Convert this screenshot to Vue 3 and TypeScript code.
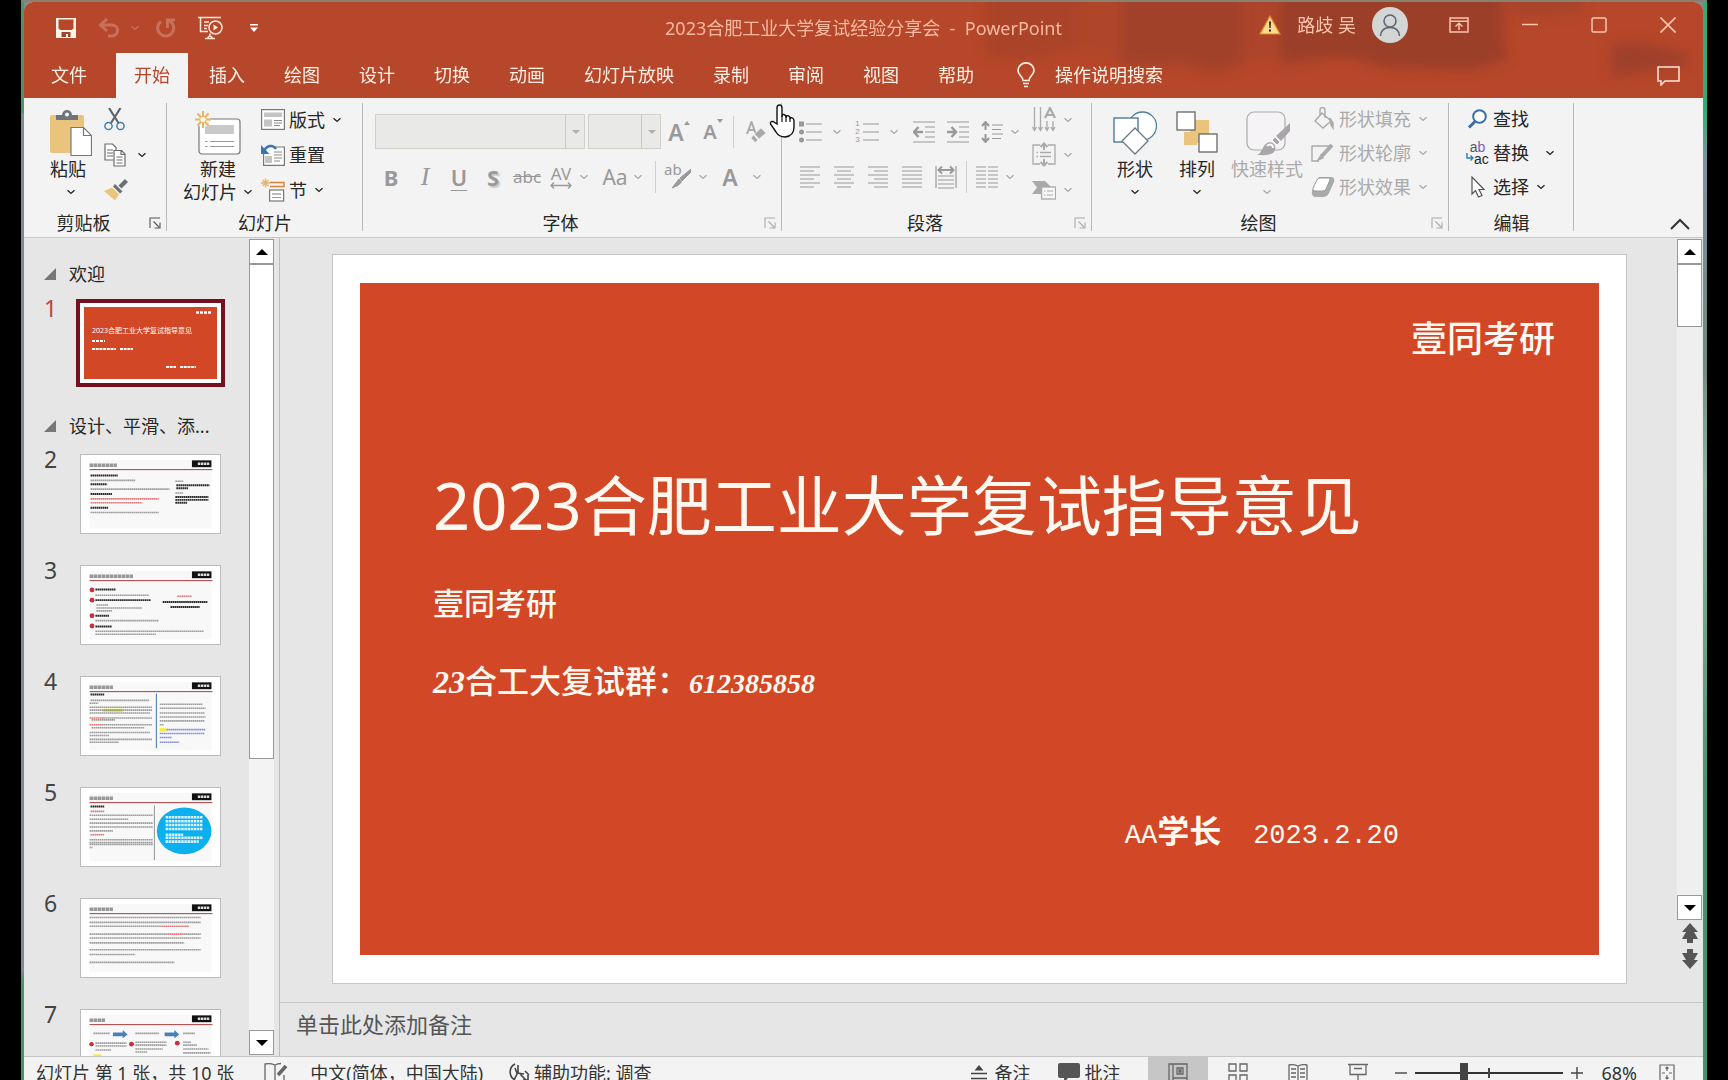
<script setup lang="ts">
import { h, ref } from 'vue'

interface Line { x: number; y: number; w: number; c?: string; b?: boolean }
interface Thumb { n: number; title: number; lines: Line[] }

const Chevron = () =>
  h('svg', { class: 'chev', viewBox: '0 0 10 6', width: 10, height: 6, 'aria-hidden': 'true' }, [
    h('path', { d: 'M1.5 1.2 5 4.4 8.5 1.2', fill: 'none', stroke: 'currentColor', 'stroke-width': 1.4 }),
  ])

const Launcher = () =>
  h('svg', { viewBox: '0 0 12 12', width: 12, height: 12, 'aria-hidden': 'true' }, [
    h('path', { d: 'M1 11V1h10M4.500 4.500 10 10M11 5.500V11H5.500', fill: 'none', stroke: 'currentColor', 'stroke-width': 1.1 }),
  ])

const tabs = ['开始', '插入', '绘图', '设计', '切换', '动画', '幻灯片放映', '录制', '审阅', '视图', '帮助']
const activeTab = ref('开始')
const zoom = ref(32)
const notes = ref('')

const red = '#d8434a'
const grey = '#777'
const thumbs: Thumb[] = [
  { n: 2, title: 28, lines: [
    { x: 9, y: 21, w: 28, b: true }, { x: 9, y: 26, w: 46 }, { x: 9, y: 30, w: 17, b: true }, { x: 9, y: 35, w: 81 },
    { x: 9, y: 40, w: 22, b: true }, { x: 9, y: 45, w: 70, c: red }, { x: 9, y: 49, w: 53, c: red },
    { x: 9, y: 54, w: 18, b: true }, { x: 9, y: 59, w: 70 },
    { x: 96, y: 27, w: 8 }, { x: 97, y: 31, w: 34, b: true }, { x: 97, y: 34, w: 12, b: true }, { x: 96, y: 39, w: 8 },
    { x: 96, y: 43, w: 34, b: true }, { x: 96, y: 46, w: 34, b: true }, { x: 96, y: 49, w: 12, b: true }] },
  { n: 3, title: 45, lines: [
    { x: 14, y: 24, w: 21, b: true }, { x: 14, y: 30, w: 55 }, { x: 14, y: 35, w: 57, b: true }, { x: 15, y: 40, w: 12 },
    { x: 15, y: 43, w: 47 }, { x: 15, y: 46, w: 16 }, { x: 14, y: 51, w: 14, b: true }, { x: 14, y: 56, w: 65 },
    { x: 14, y: 62, w: 17, b: true }, { x: 14, y: 67, w: 111 }, { x: 14, y: 70, w: 62 },
    { x: 98, y: 31, w: 15, c: red }, { x: 83, y: 37, w: 46, b: true }, { x: 91, y: 42, w: 30, b: true }] },
  { n: 4, title: 24, lines: [
    { x: 9, y: 18, w: 14, b: true }, { x: 9, y: 24, w: 60 }, { x: 8, y: 27, w: 9 }, { x: 8, y: 31, w: 64 }, { x: 8, y: 34, w: 64 },
    { x: 8, y: 37, w: 62 }, { x: 8, y: 42, w: 14, c: red }, { x: 22, y: 42, w: 50 }, { x: 10, y: 44, w: 24 },
    { x: 8, y: 49, w: 12, c: red }, { x: 20, y: 49, w: 52 }, { x: 10, y: 52, w: 54 }, { x: 8, y: 57, w: 62 }, { x: 8, y: 60, w: 20 },
    { x: 8, y: 64, w: 64 }, { x: 8, y: 67, w: 30 },
    { x: 80, y: 28, w: 44 }, { x: 80, y: 32, w: 47 }, { x: 80, y: 37, w: 46 }, { x: 80, y: 41, w: 47 }, { x: 80, y: 45, w: 46 }, { x: 80, y: 49, w: 4 },
    { x: 87, y: 54, w: 40, c: '#5566cc' }, { x: 80, y: 58, w: 46, c: '#5566cc' }, { x: 80, y: 62, w: 12, c: '#5566cc' }, { x: 80, y: 67, w: 20, c: '#5566cc' }] },
  { n: 5, title: 24, lines: [
    { x: 9, y: 19, w: 14, b: true }, { x: 9, y: 24, w: 14, c: red }, { x: 8, y: 28, w: 65 }, { x: 8, y: 32, w: 40 }, { x: 8, y: 36, w: 65 },
    { x: 8, y: 40, w: 65 }, { x: 8, y: 44, w: 24 }, { x: 9, y: 48, w: 14, c: red }, { x: 8, y: 53, w: 65 }, { x: 8, y: 56, w: 65 },
    { x: 8, y: 58, w: 65 }, { x: 8, y: 61, w: 3 }] },
  { n: 6, title: 24, lines: [
    { x: 8, y: 19, w: 114 }, { x: 8, y: 24, w: 114 }, { x: 8, y: 28, w: 74 }, { x: 82, y: 28, w: 28, c: red },
    { x: 8, y: 36, w: 80 }, { x: 88, y: 36, w: 14, c: red }, { x: 102, y: 36, w: 20 }, { x: 8, y: 40, w: 114 }, { x: 8, y: 45, w: 97 },
    { x: 8, y: 52, w: 114 }, { x: 8, y: 57, w: 47 }, { x: 8, y: 65, w: 87 }] },
  { n: 7, title: 16, lines: [
    { x: 12, y: 24, w: 17 }, { x: 55, y: 24, w: 24 }, { x: 104, y: 24, w: 12 }, { x: 14, y: 34, w: 32 }, { x: 14, y: 37, w: 32 }, { x: 14, y: 41, w: 16 },
    { x: 55, y: 33, w: 32 }, { x: 55, y: 36, w: 32 }, { x: 55, y: 40, w: 28 }, { x: 55, y: 43, w: 12 }, { x: 104, y: 33, w: 8 }, { x: 104, y: 36, w: 14 },
    { x: 104, y: 40, w: 26 }, { x: 104, y: 44, w: 28 }] },
]
</script>

<template>
  <div class="frame">
    <div class="window">
      <header class="head">
        <svg class="smudge" viewBox="0 0 760 96" width="760" height="96" aria-hidden="true">
          <defs><filter id="soft" x="-10%" y="-30%" width="120%" height="160%"><feGaussianBlur stdDeviation="6" /></filter></defs>
          <g filter="url(#soft)" fill="#983f29">
            <path d="M42-20H136V44L88 58 42 54Z" opacity=".4" />
            <path d="M136-20H178V60L136 50Z" opacity=".2" />
            <path d="M178-20H300V62L270 72 240 62 178 64Z" opacity=".7" />
            <path d="M300-20H338V54L300 60Z" opacity=".3" />
            <path d="M338-20H560V44L566 56 530 68 450 66 400 54 338 62Z" opacity=".9" />
            <path d="M668 42 700 40 745 52V64L668 74Z" opacity=".8" />
            <path d="M560-20H640V10L570 14Z" opacity=".5" />
          </g>
        </svg>
        <div class="titlebar">
          <div class="quick">
            <button class="q-save" aria-label="保存">
              <svg width="20" height="20" viewBox="0 0 20 20"><path d="M0 0H20V20H0Z" fill="#fff3e8" /><path d="M2.500 1.500H17.500V10.500L15.500 12H4.500L2.500 10.500Z" fill="#b7472a" /><path d="M5.500 14H14.500V19H12V16H10V19H5.500Z" fill="#9a4632" /></svg>
            </button>
            <button class="q-undo" aria-label="撤消" disabled>
              <svg width="22" height="20" viewBox="0 0 22 20" fill="none" stroke="currentColor" stroke-width="3"><path d="M3 7H14A5.500 5.500 0 0 1 14 18H10" /><path d="M9 1 2.500 7 9 13" /></svg>
            </button>
            <button class="q-more" aria-label="撤消列表" disabled><Chevron /></button>
            <button class="q-redo" aria-label="重复" disabled>
              <svg width="20" height="22" viewBox="0 0 20 22" fill="none" stroke="currentColor" stroke-width="3"><path d="M5 4.500A8 8 0 1 0 13.500 4" /><path d="M11.500 11V3H19" /></svg>
            </button>
            <button class="q-show" aria-label="从头开始放映">
              <svg width="25" height="24" viewBox="0 0 25 24" fill="none" stroke="#ffe6d8" stroke-width="1.500"><path d="M0 1.500H23M2.500 2V15.500H10M6 6H11M6 9.500H10M6 12.500H9" /><circle cx="17.500" cy="11.500" r="6.500" /><path d="M15.500 8.500 20 11.500 15.500 14.500Z" fill="#ffe6d8" stroke="none" /><path d="M12 17.500V20M7 22.500H17M9.500 22 12 19.500 14.500 22" /></svg>
            </button>
            <button class="q-custom" aria-label="自定义快速访问工具栏">
              <svg width="8" height="8" viewBox="0 0 8 8" fill="#fff"><path d="M0 0H8V1.500H0ZM0 3.500H8L4 8Z" /></svg>
            </button>
          </div>
          <h1>2023合肥工业大学复试经验分享会&nbsp; -&nbsp; PowerPoint</h1>
          <div class="account">
            <svg class="warn" width="22" height="20" viewBox="0 0 22 20"><path d="M11 1 21 19H1Z" fill="#ffd98c" stroke="#e08a2c" stroke-width="1.200" /><path d="M10 6.500H12L11.600 13H10.400ZM10 14.500H12V16.500H10Z" fill="#222" /></svg>
            <span class="user">路歧 吴</span>
            <span class="avatar"><svg width="24" height="24" viewBox="0 0 24 24" fill="none" stroke="#5c6470" stroke-width="1.500"><circle cx="12" cy="8" r="6" /><path d="M2.500 23C3 17 7 14.500 12 14.500S21 17 21.500 23" /></svg></span>
            <button class="win" aria-label="功能区显示选项"><svg width="20" height="16" viewBox="0 0 20 16" fill="none" stroke="currentColor" stroke-width="1.500"><path d="M1 1H19V15H1ZM1 4.200H19M10 13V7M6.500 9.500 10 6.200 13.500 9.500" /></svg></button>
            <button class="win" aria-label="最小化"><svg width="16" height="16" viewBox="0 0 16 16" stroke="currentColor" stroke-width="1.500"><path d="M0 7.500H16" /></svg></button>
            <button class="win" aria-label="最大化"><svg width="16" height="16" viewBox="0 0 16 16" fill="none" stroke="currentColor" stroke-width="1.500"><rect x="1" y="1" width="14" height="14" rx="1.500" /></svg></button>
            <button class="win" aria-label="关闭"><svg width="16" height="16" viewBox="0 0 16 16" stroke="currentColor" stroke-width="1.600"><path d="M.5.500 15.500 15.500M15.500.500.5 15.500" /></svg></button>
          </div>
        </div>
        <nav class="tabs">
          <button class="tab file">文件</button>
          <button v-for="t in tabs" :key="t" class="tab" :class="{ on: t === activeTab }" @click="activeTab = t">{{ t }}</button>
          <button class="tell">
            <svg width="18" height="26" viewBox="0 0 18 26" fill="none" stroke="#ffefe4" stroke-width="1.700"><path d="M6 18.500C6 14.500 1 13 1 8.500A8 7.600 0 0 1 17 8.500C17 13 12 14.500 12 18.500ZM6 21.500H12M7 24.500H11" /></svg>
            操作说明搜索
          </button>
          <button class="talk" aria-label="批注">
            <svg width="23" height="20" viewBox="0 0 23 20" fill="none" stroke="#ffe6d8" stroke-width="1.500"><path d="M1 1H22V15H8L4 19V15H1Z" /></svg>
          </button>
        </nav>
      </header>

      <section class="ribbon">
        <div class="group clip">
          <div class="body">
            <button class="big">
              <svg width="42" height="46" viewBox="0 0 42 46"><rect x="0" y="5" width="34" height="38" rx="2" fill="#eac47c" /><path d="M6 10V5H12A5 5 0 0 1 22 5H28V10Z" fill="#6f747c" /><circle cx="17" cy="4.500" r="2" fill="#f3f3f3" /><path d="M21 17.500H33.500L41.500 25.500V45.500H21Z" fill="#fff" stroke="#777" stroke-width="1.200" /><path d="M33.500 17.500V25.500H41.500" fill="none" stroke="#777" stroke-width="1.200" /></svg>
              <span class="cap">粘贴</span><span class="row2"><Chevron /></span>
            </button>
            <div class="stack">
              <button class="small" aria-label="剪切"><svg width="22" height="23" viewBox="0 0 22 23" fill="none"><path d="M5 0 14.500 15M16.500 0 7 15" stroke="#5f6670" stroke-width="2.200" /><circle cx="4.500" cy="18" r="3.600" stroke="#3f7caf" stroke-width="1.500" /><circle cx="16.500" cy="18" r="3.600" stroke="#3f7caf" stroke-width="1.500" /></svg></button>
              <button class="small copy" aria-label="复制"><svg width="22" height="24" viewBox="0 0 22 24" fill="#fff" stroke="#6b6b6b" stroke-width="1.200"><path d="M1 1H8.500L12 4.500V17H1ZM3 7H9M3 10H9M3 13H9" /><path d="M10 7.500H17.500L21 11V23H10ZM17 8V11.500H21M12.500 14H18.500M12.500 17H18.500M12.500 20H18.500" /></svg><Chevron /></button>
              <button class="small" aria-label="格式刷"><svg width="24" height="22" viewBox="0 0 24 22"><path d="M21 0 24 3 17.500 9.500 14.500 6.500Z" fill="#6b7078" /><path d="M11 5 18.500 12.500 16 14.500 9 7.500Z" fill="#6b7078" /><path d="M8 8.500 15 15.500 11 21.500 0 12Z" fill="#eac47c" /></svg></button>
            </div>
          </div>
          <div class="name"><span>剪贴板</span><button class="launch" aria-label="剪贴板选项"><Launcher /></button></div>
        </div>

        <div class="group slides">
          <div class="body">
            <button class="big wide">
              <svg width="46" height="44" viewBox="0 0 46 44"><rect x="4" y="8" width="41" height="35" rx="3" fill="#fff" stroke="#777" stroke-width="1.200" /><path d="M10 14H39V23H10Z" fill="#c9c9c9" /><path d="M10 30.500H12.500M15 30.500H39M10 35.500H12.500M15 35.500H39" stroke="#999" /><circle cx="8" cy="8.500" r="7.500" fill="#f3f3f3" /><g stroke="#e8b566" stroke-width="2"><path d="M8 0V17M0 8.500H16M2.500 2.500 13.500 14.500M13.500 2.500 2.500 14.500" /></g><circle cx="8" cy="8.500" r="3.200" fill="#fff6dd" stroke="#e8b566" /></svg>
              <span class="cap">新建</span><span class="row2">幻灯片<Chevron /></span>
            </button>
            <div class="stack">
              <button class="small"><svg width="24" height="21" viewBox="0 0 24 21"><rect x=".6" y=".6" width="22.800" height="19.800" fill="#fff" stroke="#777" stroke-width="1.200" /><path d="M3 3.500H21V8H3ZM3 10.500H11V17.500H3Z" fill="#c4c4c4" /><path d="M13 11.500H21M13 14H21M13 16.500H19" stroke="#888" /></svg>版式<Chevron /></button>
              <button class="small"><svg width="24" height="22" viewBox="0 0 24 22"><path d="M12 3H23.400V21.400H2.600V10" fill="#fff" stroke="#777" stroke-width="1.200" /><path d="M4 12H11V19H4Z" fill="#c4c4c4" /><path d="M13 8H21M13 11H21M13 14H21M13 17H19" stroke="#888" /><path d="M3 7C6 1 12 .500 15 5" fill="none" stroke="#3f74ad" stroke-width="2.400" /><path d="M0 1V10H8.500Z" fill="#3f74ad" /></svg>重置</button>
              <button class="small"><svg width="24" height="24" viewBox="0 0 24 24"><path d="M9 4.500H23V8.500H9" fill="none" stroke="#d9823b" stroke-width="1.400" /><rect x="8.600" y="12" width="14" height="11" fill="#fff" stroke="#777" stroke-width="1.200" /><path d="M11 15H20V17H11Z" fill="#bbb" /><path d="M11 19.500H20" stroke="#999" /><g stroke="#e8b566" stroke-width="1.400"><path d="M4.500.500V9.500M0 5H9M1.500 2 7.500 8M7.500 2 1.500 8" /></g></svg>节<Chevron /></button>
            </div>
          </div>
          <div class="name"><span>幻灯片</span></div>
        </div>

        <div class="group font off">
          <div class="rows">
            <div class="line combos">
              <span class="combo face"><select disabled aria-label="字体"><option></option></select><i></i></span>
              <span class="combo size"><select disabled aria-label="字号"><option></option></select><i></i></span>
              <button class="grow" aria-label="增大字号" disabled><span>A</span><svg width="6" height="4" viewBox="0 0 6 4"><path d="M0 4 3 0 6 4Z" fill="currentColor" /></svg></button>
              <button class="grow less" aria-label="减小字号" disabled><span>A</span><svg width="6" height="4" viewBox="0 0 6 4"><path d="M0 0H6L3 4Z" fill="currentColor" /></svg></button>
              <b class="sep"></b>
              <button class="erase" aria-label="清除格式" disabled><svg width="20" height="22" viewBox="0 0 20 22"><path d="M1 13 5.500 1 9.500 12M2.500 9H8" fill="none" stroke="currentColor" stroke-width="2" /><path d="M15 7 20 12 13 18 8.500 13ZM7.500 14 12 19 9 21.500 5 17Z" fill="currentColor" stroke="#f3f3f3" stroke-width=".6" /></svg></button>
            </div>
            <div class="line">
              <button class="cell glyph" disabled><strong>B</strong></button>
              <button class="cell glyph it" disabled><em>I</em></button>
              <button class="cell glyph" disabled><u>U</u></button>
              <button class="cell glyph sh" disabled><strong>S</strong></button>
              <button class="cell abc" disabled><s>abc</s></button>
              <button class="cell av" disabled aria-label="字符间距"><span>AV</span><svg width="22" height="7" viewBox="0 0 22 7" fill="none" stroke="currentColor" stroke-width="1.300"><path d="M1 3.500H21M4 .500 1 3.500 4 6.500M18 .500 21 3.500 18 6.500" /></svg></button>
              <button class="drop" disabled aria-label="字符间距列表"><Chevron /></button>
              <button class="cell aa" disabled>Aa</button>
              <button class="drop" disabled aria-label="更改大小写列表"><Chevron /></button>
              <b class="sep"></b>
              <button class="cell pen" disabled aria-label="突出显示"><span>ab</span><svg width="22" height="20" viewBox="0 0 22 20"><path d="M22 0 11 9 13 12 22 3ZM10 10 12.500 13 9 16.500 3 19Z" fill="currentColor" stroke="currentColor" /></svg></button>
              <button class="drop gap" disabled aria-label="突出显示颜色"><Chevron /></button>
              <button class="cell colr" disabled>A</button>
              <button class="drop far" disabled aria-label="字体颜色"><Chevron /></button>
            </div>
          </div>
          <div class="name"><span>字体</span><button class="launch" aria-label="字体选项"><Launcher /></button></div>
        </div>

        <div class="group para off">
          <div class="body">
            <div class="rows">
              <div class="line first">
                <button class="cell" disabled aria-label="项目符号"><svg width="23" height="22" viewBox="0 0 23 22"><path d="M0 .500H5V5.500H0Z" fill="currentColor" /><circle cx="2.500" cy="11" r="2.500" fill="currentColor" /><circle cx="2.500" cy="19" r="2.500" fill="currentColor" /><path d="M7 3H23M7 11H23M7 19H23" stroke="currentColor" stroke-width="1.200" /></svg></button>
                <button class="drop far" disabled aria-label="项目符号列表"><Chevron /></button>
                <button class="cell num" disabled aria-label="编号"><span><i>1</i><i>2</i><i>3</i></span><svg width="16" height="22" viewBox="0 0 16 22"><path d="M0 3H16M0 11H16M0 19H16" stroke="currentColor" stroke-width="1.200" /></svg></button>
                <button class="drop far" disabled aria-label="编号列表"><Chevron /></button>
                <button class="cell" disabled aria-label="减少缩进"><svg width="22" height="22" viewBox="0 0 22 22" fill="none" stroke="currentColor" stroke-width="1.200"><path d="M0 1H22M12 6H22M12 11H22M12 16H22M0 21H22" /><path d="M1 11H10M5.500 6 1 11 5.500 16" stroke-width="2.500" /></svg></button>
                <button class="cell" disabled aria-label="增加缩进"><svg width="22" height="22" viewBox="0 0 22 22" fill="none" stroke="currentColor" stroke-width="1.200"><path d="M0 1H22M12 6H22M12 11H22M12 16H22M0 21H22" /><path d="M0 11H9M4.500 6 9 11 4.500 16" stroke-width="2.500" /></svg></button>
                <button class="cell" disabled aria-label="行距"><svg width="22" height="22" viewBox="0 0 22 22" fill="none" stroke="currentColor" stroke-width="1.200"><path d="M11 4H22M11 8.500H20M11 13H22M11 17.500H20" /><path d="M4.500 1V9M1 5 4.500 1 8 5M4.500 13V21M1 17 4.500 21 8 17" stroke-width="2" /></svg></button>
                <button class="drop" disabled aria-label="行距列表"><Chevron /></button>
              </div>
              <div class="line">
                <button class="cell" disabled aria-label="左对齐"><svg width="20" height="22" viewBox="0 0 20 22" stroke="currentColor" stroke-width="1.200"><path d="M0 1H20M0 5H14M0 9H20M0 13H14M0 17H20M0 21H14" /></svg></button>
                <button class="cell" disabled aria-label="居中"><svg width="20" height="22" viewBox="0 0 20 22" stroke="currentColor" stroke-width="1.200"><path d="M0 1H20M3 5H17M0 9H20M3 13H17M0 17H20M3 21H17" /></svg></button>
                <button class="cell" disabled aria-label="右对齐"><svg width="20" height="22" viewBox="0 0 20 22" stroke="currentColor" stroke-width="1.200"><path d="M0 1H20M6 5H20M0 9H20M6 13H20M0 17H20M6 21H20" /></svg></button>
                <button class="cell" disabled aria-label="两端对齐"><svg width="20" height="22" viewBox="0 0 20 22" stroke="currentColor" stroke-width="1.200"><path d="M0 1H20M0 5H20M0 9H20M0 13H20M0 17H20M0 21H20" /></svg></button>
                <button class="cell" disabled aria-label="分散对齐"><svg width="22" height="24" viewBox="0 0 22 24" fill="none" stroke="currentColor" stroke-width="1.200"><path d="M1 1V23M21 1V23M3 11H19M3 15H19M3 19H19M3 23H19" /><path d="M4 5H18M7 1.500 3.500 5 7 8.500M15 1.500 18.500 5 15 8.500" stroke-width="2" /></svg></button>
                <b class="sep tight"></b>
                <button class="cell" disabled aria-label="分栏"><svg width="22" height="22" viewBox="0 0 22 22" stroke="currentColor" stroke-width="1.200"><path d="M0 1H10M12 1H22M0 5H10M12 5H22M0 9H10M12 9H22M0 13H10M12 13H22M0 17H10M12 17H22M0 21H10M12 21H22" /></svg></button>
                <button class="drop" disabled aria-label="分栏列表"><Chevron /></button>
              </div>
            </div>
            <div class="stack">
              <button class="small" disabled aria-label="文字方向"><svg width="24" height="25" viewBox="0 0 24 25" fill="none" stroke="currentColor" stroke-width="1.300"><path d="M2.500 0V23M8.500 0V23M15 14V23M21 14V23M.500 20 2.500 23.500 4.500 20M6.500 20 8.500 23.500 10.500 20M13 20 15 23.500 17 20M19 20 21 23.500 23 20" /><path d="M13 11 18 1 23 11M14.500 8H21.500" stroke-width="2.200" /></svg><Chevron /></button>
              <button class="small" disabled aria-label="对齐文本"><svg width="24" height="25" viewBox="0 0 24 25" fill="none" stroke="currentColor" stroke-width="1.300"><path d="M8 3H1V22H8M16 3H23V22H16M4.500 10.500H6M8 10.500H19M4.500 14.500H6M8 14.500H19" /><path d="M12 8V1.500M8.500 5 12 1.500 15.500 5M12 17V23.500M8.500 20 12 23.500 15.500 20" stroke-width="2" /></svg><Chevron /></button>
              <button class="small" disabled aria-label="转换为 SmartArt"><svg width="24" height="20" viewBox="0 0 24 20"><path d="M0 1H13L19 7 13 14H0L5 7.500Z" fill="currentColor" /><rect x="9.600" y="7" width="14" height="12" fill="#f7f7f7" stroke="currentColor" stroke-width="1.300" /><path d="M12 11H13.500M15 11H21M12 15H13.500M15 15H21" stroke="currentColor" /></svg><Chevron /></button>
            </div>
          </div>
          <div class="name"><span>段落</span><button class="launch" aria-label="段落选项"><Launcher /></button></div>
        </div>

        <div class="group draw">
          <div class="body">
            <button class="big">
              <svg width="44" height="44" viewBox="0 0 44 44" fill="#fff" stroke="#4d7f9f" stroke-width="1.300"><circle cx="29.500" cy="15" r="14" /><rect x="1" y="7" width="24" height="24" stroke="#3c7390" /><path d="M22 17 35 30 22 43 9 30Z" stroke="#6b7785" /></svg>
              <span class="cap">形状</span><span class="row2"><Chevron /></span>
            </button>
            <button class="big arrange">
              <svg width="42" height="44" viewBox="0 0 42 44"><path d="M14 9H33V27H27V32H21V34H8V21H14Z" fill="#eac47c" /><rect x="1" y="1" width="18" height="18" fill="#fff" stroke="#666" stroke-width="1.300" /><rect x="23" y="23" width="18" height="18" fill="#fff" stroke="#666" stroke-width="1.300" /></svg>
              <span class="cap">排列</span><span class="row2"><Chevron /></span>
            </button>
            <button class="big quickstyle" disabled>
              <svg width="46" height="46" viewBox="0 0 46 46"><rect x="3" y="2" width="38" height="38" rx="7" fill="#f6f3f6" stroke="#aaa" stroke-width="1.200" /><path d="M46 13V21L37 31 32 26Z" fill="#a9a6aa" /><path d="M31 27 36 32 33 35 28 30Z" fill="#a9a6aa" stroke="#f3f3f3" /><path d="M13 45C19 43 18 33 26 32 32 33 33 39 29 43 24 46 18 45 13 45Z" fill="#a9a6aa" /><path d="M23 36C26 33 29 35 29 38" fill="none" stroke="#fff" stroke-width="2" /></svg>
              <span class="cap">快速样式</span><span class="row2"><Chevron /></span>
            </button>
            <div class="stack">
              <button class="small" disabled><svg width="24" height="24" viewBox="0 0 24 24" fill="none" stroke="currentColor" stroke-width="1.400"><path d="M11 6 20 14 12 21 4 14ZM9 9V3A2.500 2.500 0 0 1 14 3V11" /><path d="M19 11 22 16V21L20 18Z" fill="currentColor" /></svg>形状填充<Chevron /></button>
              <button class="small" disabled><svg width="24" height="22" viewBox="0 0 24 22" fill="none" stroke="currentColor" stroke-width="1.400"><path d="M18 4H1V19H8" /><path d="M21 3 11 14" stroke-width="4" /><path d="M10 13 7 18 12 16Z" fill="currentColor" /></svg>形状轮廓<Chevron /></button>
              <button class="small" disabled><svg width="24" height="22" viewBox="0 0 24 22"><path d="M8 1H20Q24 1 23 6L18 17Q16 21 12 21H4Q0 20 1 15Z" fill="currentColor" /><path d="M9 2H18Q20 2 19 4L15 13Q14 15 12 15H4Q1 15 2 12L6 4Q7 2 9 2Z" fill="#fff" stroke="#999" /></svg>形状效果<Chevron /></button>
            </div>
          </div>
          <div class="name off"><span>绘图</span><button class="launch" aria-label="绘图选项"><Launcher /></button></div>
        </div>

        <div class="group edit">
          <div class="body">
            <div class="stack">
              <button class="small"><svg width="23" height="20" viewBox="0 0 23 20" fill="none"><circle cx="13.500" cy="7.500" r="6.300" fill="#fff" stroke="#3a6ea5" stroke-width="2" /><path d="M9 12.500 3 18.500" stroke="#3a6ea5" stroke-width="3" /></svg>查找</button>
              <button class="small replace"><span class="abac"><span class="ab">a<i>b</i></span><span class="ac"><svg width="8" height="8" viewBox="0 0 8 8" fill="none" stroke="#2f7db5" stroke-width="1.400"><path d="M1 0V5H7M4.500 2.500 7 5 4.500 7.500" /></svg>ac</span></span>替换<Chevron /></button>
              <button class="small"><svg width="23" height="22" viewBox="0 0 23 22" fill="#fff" stroke="#555" stroke-width="1.200"><path d="M6 1V18L9.500 14.500 12.500 21 16 19.500 13 13.500H18Z" /></svg>选择<Chevron /></button>
            </div>
          </div>
          <div class="name"><span>编辑</span></div>
        </div>
        <button class="fold" aria-label="折叠功能区"><svg width="20" height="12" viewBox="0 0 20 12" fill="none" stroke="#333" stroke-width="2"><path d="M1 11 10 2 19 11" /></svg></button>
      </section>

      <main class="work">
        <aside class="side">
          <div class="list">
            <h2><svg width="12" height="12" viewBox="0 0 12 12"><path d="M12 0V12H0Z" fill="#777" /></svg>欢迎</h2>
            <div class="item current">
              <span class="no">1</span>
              <div class="cover">
                <svg viewBox="0 0 133 72" aria-hidden="true">
                  <g stroke="#fff" stroke-width="2.400" fill="none"><path d="M112 5.500H128" stroke-dasharray="3 1" /><path d="M8 34H21" stroke-width="1.800" stroke-dasharray="3 1" /><path d="M8 42H32M36 42H49" stroke-dasharray="3 .7" stroke-width="2" /><path d="M82 60H92M96 60H112" stroke-width="1.800" stroke-dasharray="3 .7" /></g>
                  <text x="8" y="26" font-size="7" fill="#fff">2023合肥工业大学复试指导意见</text>
                </svg>
              </div>
            </div>
            <h2 class="second"><svg width="12" height="12" viewBox="0 0 12 12"><path d="M12 0V12H0Z" fill="#777" /></svg>设计、平滑、添...</h2>
            <div v-for="t in thumbs" :key="t.n" class="item">
              <span class="no">{{ t.n }}</span>
              <svg class="thumb" viewBox="0 0 141 80" aria-hidden="true">
                <path d="M8 5H133V75H8Z" fill="#f8f8f8" />
                <path :d="`M8 10.500H${8 + t.title}`" stroke="#666" stroke-width="3.600" stroke-dasharray="3.600 .5" opacity=".65" />
                <path d="M113 5.500H133V12.500H113Z" fill="#111" /><path d="M119 9H131" stroke="#ddd" stroke-width="2.600" stroke-dasharray="2.500 .6" />
                <path d="M8 15H134" stroke="#a8383c" />
                <path v-if="t.n === 4" d="M22 32.500H42V36H22ZM80 52.500H87V56H80Z" fill="#f3ee2c" />
                <path v-if="t.n === 4" d="M76.500 17V73" stroke="#3b6fb5" />
                <path v-for="(l, i) in t.lines" :key="i" :d="`M${l.x} ${l.y}H${l.x + l.w}`" :stroke="l.c || (l.b ? '#222' : grey)" :stroke-width="l.b ? 2 : 1.6" stroke-dasharray="1.700 .4" :opacity="l.b ? 0.95 : 0.7" />
                <g v-if="t.n === 3" fill="#c0343c"><circle cx="10.500" cy="24.500" r="2.500" /><circle cx="10.500" cy="35" r="2.500" /><circle cx="10.500" cy="51" r="2.500" /><circle cx="10.500" cy="61.500" r="2.500" /></g>
                <g v-if="t.n === 5"><path d="M74.500 18V74" stroke="#777" stroke-width=".8" /><ellipse cx="105" cy="44" rx="28" ry="24" fill="#0db0ef" /><path d="M86 30H124M86 34H124M86 38H124M86 42H124M86 48H104M86 51H124M86 55H120" stroke="#d9f3ff" stroke-width="2.600" stroke-dasharray="2.600 .6" /></g>
                <g v-if="t.n === 7"><path d="M32 23H42V20.500L47 25 42 29V27H32ZM85 23H95V20.500L100 25 95 29V27H85Z" fill="#4a80b8" /><circle cx="10" cy="35" r="2.300" fill="#c0343c" /><circle cx="51" cy="35" r="2.500" fill="#c0343c" /><circle cx="98" cy="34" r="2.500" fill="#c0343c" /><path d="M12 45.500H20V48H12Z" fill="#f3ee2c" /></g>
              </svg>
            </div>
          </div>
          <div class="bar left">
            <button aria-label="向上滚动"><svg width="12" height="6" viewBox="0 0 12 6"><path d="M0 6 6 0 12 6Z" /></svg></button>
            <span class="grip"></span><span class="track"></span>
            <button aria-label="向下滚动"><svg width="12" height="6" viewBox="0 0 12 6"><path d="M0 0H12L6 6Z" /></svg></button>
          </div>
        </aside>

        <div class="editor">
          <div class="stage">
            <article class="slide">
              <div class="canvas">
                <p class="brand">壹同考研</p>
                <h3>2023合肥工业大学复试指导意见</h3>
                <p class="sub">壹同考研</p>
                <p class="sub qq"><em>23</em>合工大复试群：<em class="id">612385858</em></p>
                <p class="by"><span>AA</span><b>学长</b><span class="date">2023.2.20</span></p>
              </div>
            </article>
            <div class="bar right">
              <button aria-label="上一页"><svg width="12" height="6" viewBox="0 0 12 6"><path d="M0 6 6 0 12 6Z" /></svg></button>
              <span class="grip"></span><span class="track"></span>
              <button aria-label="下一页"><svg width="12" height="6" viewBox="0 0 12 6"><path d="M0 0H12L6 6Z" /></svg></button>
              <button class="jump" aria-label="上一张幻灯片"><svg width="16" height="20" viewBox="0 0 16 20"><path d="M8 0 16 9H12L16 16H11V20H5V16H0L4 9H0Z" /></svg></button>
              <button class="jump" aria-label="下一张幻灯片"><svg width="16" height="20" viewBox="0 0 16 20"><path d="M8 20 16 11H12L16 4H11V0H5V4H0L4 11H0Z" /></svg></button>
            </div>
          </div>
          <textarea v-model="notes" class="notes" placeholder="单击此处添加备注" aria-label="备注"></textarea>
        </div>
      </main>

      <footer class="status">
        <span class="count">幻灯片 第 1 张，共 10 张</span>
        <button class="s-book" aria-label="拼写检查"><svg width="24" height="22" viewBox="0 0 24 22" fill="none" stroke="#666" stroke-width="1.300"><path d="M11 3Q6 1 1 2V19Q6 18 11 20ZM11 3Q14 1.500 17 1.500M11 20Q15 18 20 19V13" /><path d="M22 4 14 13" stroke-width="3.500" /></svg></button>
        <button class="s-lang">中文(简体，中国大陆)</button>
        <button class="s-acc"><svg width="22" height="22" viewBox="0 0 22 22" fill="none" stroke="#444" stroke-width="1.600"><path d="M7 2A9 9 0 0 0 7 18M7 6 9 11 16 12M10 3V10L6 18M12 12 18 18M15 18H20V13M17 9 21 13" /></svg>辅助功能: 调查</button>
        <span class="fill"></span>
        <button class="s-note"><svg width="18" height="18" viewBox="0 0 18 18"><path d="M9 1 13.500 6.500H4.500Z" fill="#444" /><path d="M1 9.500H17M1 14.500H17" stroke="#444" stroke-width="1.400" /></svg>备注</button>
        <button class="s-talk"><svg width="22" height="20" viewBox="0 0 22 20"><path d="M2 0H20Q22 0 22 2V13Q22 15 20 15H10L6 20V15H2Q0 15 0 13V2Q0 0 2 0Z" fill="#555" /></svg>批注</button>
        <button class="view on" aria-label="普通"><svg width="20" height="20" viewBox="0 0 20 20" fill="none" stroke="#666" stroke-width="1.300"><path d="M1 1H19V19H1ZM5 1V19M5 15H19M9 5H15V11H9ZM11 7H13V9H11Z" /></svg></button>
        <button class="view" aria-label="幻灯片浏览"><svg width="20" height="20" viewBox="0 0 20 20" fill="none" stroke="#666" stroke-width="1.300"><path d="M1 1H8V8H1ZM12 1H19V8H12ZM1 12H8V19H1ZM12 12H19V19H12Z" /></svg></button>
        <button class="view" aria-label="阅读视图"><svg width="20" height="20" viewBox="0 0 20 20" fill="none" stroke="#666" stroke-width="1.300"><path d="M10 3Q5 1 1 2V18Q5 17 10 19ZM10 3Q15 1 19 2V18Q15 17 10 19M3 6H8M3 10H8M3 14H8M12 6H17M12 10H17M12 14H17" /></svg></button>
        <button class="view" aria-label="幻灯片放映"><svg width="20" height="20" viewBox="0 0 20 20" fill="none" stroke="#666" stroke-width="1.300"><path d="M0 1.500H20M2 2V11.500H18V2M6 5.500H14M10 12V17M5 18.500H15" /></svg></button>
        <button class="s-step minus" aria-label="缩小"><svg width="12" height="12" viewBox="0 0 12 12" stroke="#444" stroke-width="1.400"><path d="M0 6H12" /></svg></button>
        <input v-model="zoom" class="zoom" type="range" min="0" max="100" aria-label="缩放">
        <button class="s-step" aria-label="放大"><svg width="12" height="12" viewBox="0 0 12 12" stroke="#444" stroke-width="1.400"><path d="M0 6H12M6 0V12" /></svg></button>
        <button class="s-pct">68%</button>
        <button class="s-fit" aria-label="适应窗口"><svg width="16" height="18" viewBox="0 0 16 18" fill="none" stroke="#666" stroke-width="1.200"><path d="M1 1H15V17H1ZM8 3V7M8 11V15M3 9H6M10 9H13M6.500 4.500 8 3 9.500 4.500M6.500 13.500 8 15 9.500 13.500" /></svg></button>
      </footer>

      <svg class="hand" width="26" height="34" viewBox="0 0 26 34" aria-hidden="true"><path d="M8 20V4Q8 1 10.500 1T13 4V13Q13 10 15 10.500T17 13.500Q17.500 11 19.500 11.800T21 15Q22 13 23.500 14T25 17V23Q25 32 16 33 10 33 7 28L1.500 20Q1 17 4 17.500Z" fill="#fff" stroke="#111" stroke-width="1.400" /><path d="M13 12V18M17 13V18M21 14V18" stroke="#111" stroke-width="1.200" /></svg>
    </div>
  </div>
</template>

<style>
body { background: #000; overflow: hidden; }
</style>

<style scoped>
* { box-sizing: border-box; }
.frame {
  height: 100vh; margin: 0 21px; padding: 2px 4px 0 3px;
  font: 18px/24px "Noto Sans", "Noto Sans CJK SC", sans-serif; color: #262626;
  background:
    linear-gradient(#8a8070, #8a8070) top / 100% 2px no-repeat,
    linear-gradient(#2fae7a 0 113px, #7d93a0 160px, #6f8a80 360px, #8fb3a0 480px, #449473 800px) right / 4px 100% no-repeat,
    linear-gradient(#3f9a6c 0 113px, #7d8b92 114px 970px, #3f9a6c 980px) left / 3px 100% no-repeat, #7d8b92;
}
button { font: inherit; color: inherit; background: none; border: 0; padding: 0; margin: 0; display: flex; align-items: center; justify-content: center; white-space: nowrap; flex: none; }
svg { flex: none; display: block; }
h1, h2, h3, p { margin: 0; font-weight: 400; }
.window { position: relative; height: 100%; display: flex; flex-direction: column; border-radius: 9px 9px 0 0; overflow: hidden; background: #e6e6e6; }

.head { position: relative; background: #b7472a; color: #ffefe4; flex: none; }
.smudge { position: absolute; right: 0; top: 0; }
.titlebar { position: relative; height: 51px; display: grid; grid-template-columns: 1fr auto 1fr; align-items: center; }
.titlebar h1 { font-size: 18px; line-height: 24px; color: #f8b9a0; white-space: nowrap; padding-top: 1px; }
.quick { display: flex; align-items: center; padding-left: 32px; }
.quick button:disabled { color: #c9705a; }
.q-undo { margin-left: 22px; }
.q-more { margin-left: 10px; }
.q-redo { margin-left: 16px; }
.q-show { margin-left: 22px; }
.q-custom { margin-left: 27px; }
.account { display: flex; align-items: center; justify-content: flex-end; color: #ffc4ae; padding-right: 27px; height: 46px; align-self: start; }
.user { margin: 0 16px 0 16px; white-space: nowrap; }
.avatar { width: 36px; height: 36px; border-radius: 50%; background: #d4d6d6; display: flex; align-items: center; justify-content: center; margin-right: 41px; }
.win + .win { margin-left: 53px; }
.tabs { position: relative; display: flex; height: 45px; padding-left: 9px; gap: 3px; }
.tab { padding: 0 18px 2px; }
.tab.file { margin-right: 8px; }
.tab.on { background: #f3f3f3; color: #b7472a; }
.tell { gap: 20px; margin-left: 22px; padding-bottom: 2px; }
.talk { margin-left: auto; margin-right: 23px; }

.ribbon { display: flex; flex: none; height: 140px; padding-top: 4px; background: #f3f3f3; border-bottom: 1px solid #c8c8c8; }
.group { position: relative; display: flex; flex-direction: column; flex: none; }
.group::after { content: ""; width: 1px; background: #b9b9b9; position: absolute; right: 0; top: 1px; height: 128px; }
.body, .group > .rows { height: 106px; display: flex; }
.name { height: 29px; display: flex; align-items: center; }
.name span { flex: 1; text-align: center; }
.launch { width: 24px; height: 24px; color: #555; }
.off .launch { color: #aaa; }
.big { display: grid; grid-template-rows: 49px 24px 22px; justify-items: center; align-content: start; align-items: center; padding-top: 6px; }
.row2 { display: flex; align-items: center; gap: 6px; }
.stack { display: grid; grid-auto-rows: 35px; justify-items: start; }
.small { gap: 4px; }
.small .chev { margin-left: 3px; }
button:disabled { color: #aaa; }
.clip { width: 143px; }
.clip .body { padding-left: 26px; gap: 12px; }
.clip .cap { justify-self: start; }
.copy .chev { margin-left: 7px; }
.slides { width: 196px; }
.slides .body { padding-left: 16px; gap: 8px; }
.font { width: 419px; }
.group > .rows { flex-direction: column; padding-left: 11px; }
.rows { display: flex; flex-direction: column; padding-top: 12px; gap: 10px; }
.line { display: flex; align-items: center; height: 35px; }
.combos { padding-left: 1px; }
.combo { display: flex; height: 35px; position: relative; margin-right: 3px; }
.combo select { appearance: none; width: 100%; border: 1px solid #c2c4be; background: #e6e6e4; border-radius: 0; margin: 0; }
.combo i { position: absolute; right: 0; top: 1px; bottom: 1px; width: 20px; border-left: 1px solid #c8cac4; }
.combo i::after { content: ""; position: absolute; left: 6px; top: 15px; border: 4px solid transparent; border-top-color: #b0b0b0; border-bottom: 0; }
.face { width: 210px; }
.size { width: 73px; }
.grow { width: 22px; margin-left: 4px; align-items: flex-start; font-weight: 600; font-size: 23px; line-height: 32px; }
.grow.less { margin-left: 12px; font-size: 20px; line-height: 36px; }
.grow svg { margin-top: 5px; }
.sep { width: 1px; height: 32px; background: #d0d0d0; margin: 0 4px 0 11px; }
.sep.tight { margin: 0 3px; }
.combos .sep { margin: 0 12px 0 9px; }
.cell { width: 34px; height: 34px; }
.line .cell:disabled, .grow:disabled { color: #999; }
.glyph { font-size: 22px; }
.glyph u { text-underline-offset: 4px; text-decoration-thickness: 1px; font-weight: 600; }
.it { font-family: "Liberation Serif", serif; font-size: 26px; }
.sh { text-shadow: 2px 2px 1px #ccc; }
.abc { font-size: 17px; }
.av { flex-direction: column; font-size: 17px; line-height: 17px; }
.drop { width: 12px; height: 34px; }
.drop.gap { margin: 0 4px 0 3px; }
.drop.far { margin: 0 7px 0 4px; }
.aa { font-size: 21px; margin-left: 8px; }
.pen { position: relative; }
.pen span { position: absolute; left: 4px; top: 0; font-size: 15px; line-height: 18px; }
.pen svg { margin: 5px 0 0 6px; }
.colr { font-size: 23px; font-weight: 600; }
.para { width: 310px; }
.para .body { padding-left: 11px; }
.para .rows { width: 239px; }
.num { gap: 3px; }
.num span { display: grid; grid-auto-rows: 8px; font: 8px/8px "Liberation Sans", sans-serif; }
.num i { font-style: normal; }
.draw { width: 357px; }
.draw .body { padding-left: 21px; }
.draw .stack, .edit .stack { grid-auto-rows: 34px; }
.draw .big { min-width: 44px; }
.arrange { margin-left: 18px; }
.quickstyle { margin: 0 8px 0 12px; }
.edit { width: 125px; }
.edit .body { padding-left: 17px; }
.replace .chev { margin-left: 12px; }
.abac { width: 23px; display: flex; flex-direction: column; font: 14px/12px "Liberation Sans", sans-serif; }
.ab { color: #555; }
.ab i { color: #8a55b8; font-style: normal; }
.ac { display: flex; }
.fold { align-self: flex-end; margin: 0 13px 7px auto; }

.work { flex: 1; min-height: 0; display: flex; }
.side { width: 256px; flex: none; display: flex; border-right: 1px solid #bdbdbd; padding-right: 5px; }
.list { flex: 1; min-width: 0; overflow: hidden; padding: 24px 0 0 20px; }
.list h2 { display: flex; align-items: center; gap: 13px; font-size: 18px; line-height: 24px; height: 24px; white-space: nowrap; }
.item { display: flex; margin-bottom: 31px; }
.item .no { width: 36px; font-size: 23px; line-height: 24px; margin-top: -7px; color: #444; flex: none; }
.thumb { width: 141px; height: 80px; background: #fff; border: 1px solid #bbb; }
.current { margin: 13px 0 27px; }
.current .no { width: 32px; margin-top: -3px; color: #c0453f; }
.cover { width: 149px; height: 88px; border: 4px solid #74101f; background: #fff; padding: 4px; }
.cover svg { width: 100%; background: #d24726; height: 72px; }
.second { margin-bottom: 16px; }
.bar { width: 25px; flex: none; display: flex; flex-direction: column; background: #f3f3f3; }
.bar button { height: 25px; border: 1px solid #999; background: #fff; }
.bar .grip { border: 1px solid #999; background: #fff; }
.left { margin: 1px 0; }
.left .grip { flex: 494; }
.left .track { flex: 272; }
.editor { flex: 1; min-width: 0; display: flex; flex-direction: column; }
.stage { flex: 1; min-height: 0; display: flex; padding-right: 1px; }
.right { margin-top: 1px; background: #efefef; margin-bottom: 30px; }
.right .grip { height: 63px; }
.right .track { flex: 1; }
.bar .jump { border: 0; background: #e6e6e6; height: 26px; fill: #555; }
.slide { flex: 1; min-width: 0; margin: 16px 50px 18px 52px; padding: 28px 27px; background: #fff; border: 1px solid #c6c6c6; display: flex; }
.canvas { flex: 1; min-width: 0; background: #d24726; color: #fff8f0; padding: 32px 44px 0 73px; display: flex; flex-direction: column; white-space: nowrap; }
.brand { align-self: flex-end; font-size: 36px; line-height: 48px; font-weight: 500; }
.canvas h3 { font-size: 65px; line-height: 80px; margin-top: 102px; }
.sub { font-size: 31px; line-height: 40px; margin-top: 38px; font-weight: 500; }
.qq { font-size: 32px; }
.qq em { font: italic bold 32px/40px "Liberation Serif", serif; }
.qq .id { font-size: 28px; }
.by { align-self: flex-end; display: flex; align-items: baseline; margin: auto 156px 99px 0; font: 27px/40px "Liberation Mono", monospace; }
.by b { font: 700 32px/40px "Noto Sans CJK SC", sans-serif; }
.date { margin-left: 32px; }
.notes { flex: none; height: 54px; width: 100%; border: 0; border-top: 1px solid #c6c6c6; background: #e6e6e6; padding: 6px 16px 0; margin: 0; resize: none; outline: 0; overflow: hidden; font: 22px/30px "Noto Sans", "Noto Sans CJK SC", sans-serif; display: block; }
.notes::placeholder { color: #555; opacity: 1; }

.status { height: 24px; flex: none; display: flex; align-items: flex-start; background: #f3f3f3; border-top: 1px solid #c6c6c6; overflow: hidden; padding-left: 12px; color: #333; }
.status > * { height: 32px; line-height: 32px; }
.count { white-space: nowrap; }
.s-book { margin-left: 30px; }
.s-lang { margin-left: 22px; }
.s-acc { margin-left: 25px; gap: 4px; }
.fill { flex: 1; }
.s-note, .s-talk { gap: 6px; }
.s-talk { margin: 0 28px; gap: 4px; }
.view { width: 60px; }
.view.on { background: #c6c6c6; }
.s-step.minus { margin-left: 7px; }
.zoom { appearance: none; width: 148px; margin: 0 8px; background: linear-gradient(#444, #444) 50% 50% / 2px 10px no-repeat, linear-gradient(#333, #333) 50% 50% / 100% 2px no-repeat; }
.zoom::-webkit-slider-thumb { appearance: none; width: 8px; height: 20px; background: #444; border: 0; }
.s-pct { margin-left: 18px; }
.s-fit { margin: 0 28px 0 22px; }
.hand { position: absolute; left: 745px; top: 102px; }
</style>
